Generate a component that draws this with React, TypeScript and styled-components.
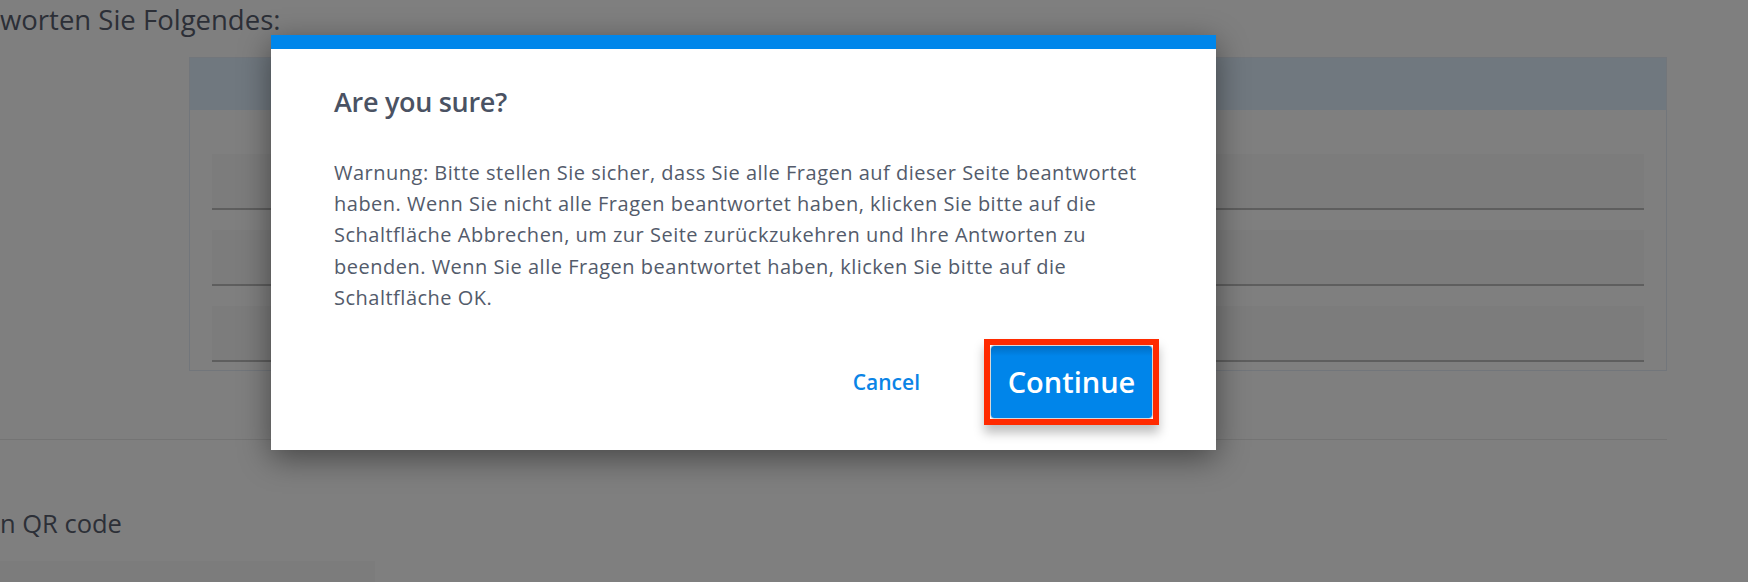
import styled, { createGlobalStyle } from 'styled-components';

const GlobalStyle = createGlobalStyle`
  html, body {
    margin: 0;
    padding: 0;
    background: #ffffff;
  }
  body {
    font-family: 'Open Sans', 'Noto Sans', sans-serif;
  }
`;

const Page = styled.div`
  position: relative;
  width: 1748px;
  height: 582px;
  overflow: hidden;
  background: #ffffff;
  display: flex;
  flex-direction: column;
`;

const SectionTitle = styled.h2<{ $top?: number; $size?: number }>`
  margin: ${(p) => p.$top ?? 0}px 0 0 0;
  font-size: ${(p) => p.$size ?? 26}px;
  line-height: 32px;
  font-weight: 400;
  color: #585e6e;
  white-space: nowrap;
`;

const Panel = styled.div`
  margin: 21px 0 0 189px;
  width: 1478px;
  box-sizing: border-box;
  border: 1px solid #e4ecf6;
  display: flex;
  flex-direction: column;
  padding-bottom: 8px;
`;

const PanelHeader = styled.div`
  height: 52px;
  background: #e0f0ff;
  margin-bottom: 44px;
`;

const RowList = styled.div`
  display: flex;
  flex-direction: column;
  gap: 20px;
  padding: 0 22px;
`;

const AnswerRow = styled.div`
  height: 54px;
  background: #f9f9f9;
  border-bottom: 2px solid #bdbdbd;
`;

const Divider = styled.div`
  margin-top: 68px;
  width: 1667px;
  height: 1px;
  background: #e8e8e8;
`;

const Strip = styled.div`
  margin-top: 22px;
  width: 375px;
  height: 30px;
  background: #f8f8f8;
`;

const Overlay = styled.div`
  position: absolute;
  inset: 0;
  background: rgba(0, 0, 0, 0.5);
  display: flex;
  align-items: flex-start;
  padding: 35px 0 0 271px;
`;

const Dialog = styled.div`
  width: 945px;
  background: #ffffff;
  border-top: 14px solid #0086ea;
  box-shadow: 0 8px 30px rgba(0, 0, 0, 0.45);
  padding: 36px 63px 25px;
  box-sizing: border-box;
  display: flex;
  flex-direction: column;
`;

const DialogTitle = styled.h3`
  margin: 0;
  font-size: 27px;
  line-height: 33.6px;
  font-weight: 600;
  letter-spacing: -0.3px;
  color: #4a5263;
`;

const DialogText = styled.p`
  margin: 38px 0 0;
  font-size: 20px;
  line-height: 31.4px;
  font-weight: 400;
  letter-spacing: 0.5px;
  color: #535b6b;
`;

const Actions = styled.div`
  margin-top: 25px;
  display: flex;
  justify-content: flex-end;
  align-items: center;
  gap: 64px;
`;

const LinkButton = styled.button`
  border: none;
  background: none;
  padding: 0;
  font-family: inherit;
  font-size: 21px;
  font-weight: 600;
  color: #0a84e6;
  cursor: pointer;
`;

/* red annotation box drawn around the primary action */
const HighlightFrame = styled.span`
  display: inline-flex;
  margin-right: -6px;
  border: 6px solid #ff2a00;
  box-shadow: 0 8px 10px rgba(0, 0, 0, 0.25);
`;

const PrimaryButton = styled.button`
  width: 163px;
  height: 74px;
  box-sizing: border-box;
  border: 1px solid #d6d6d6;
  border-radius: 4px;
  background: linear-gradient(#006ec4 0px, #0085ea 10px, #0085ea 100%);
  font-family: inherit;
  font-size: 29px;
  font-weight: 600;
  color: #ffffff;
  cursor: pointer;
`;

export default function App() {
  return (
    <>
      <GlobalStyle />
      <Page>
        <SectionTitle $top={4} $size={27.5}>
          worten Sie Folgendes:
        </SectionTitle>
        <Panel>
          <PanelHeader />
          <RowList>
            <AnswerRow />
            <AnswerRow />
            <AnswerRow />
          </RowList>
        </Panel>
        <Divider />
        <SectionTitle $top={67} $size={25.5}>
          n QR code
        </SectionTitle>
        <Strip />
        <Overlay>
          <Dialog role="dialog" aria-modal="true">
            <DialogTitle>Are you sure?</DialogTitle>
            <DialogText>
              Warnung: Bitte stellen Sie sicher, dass Sie alle Fragen auf dieser Seite beantwortet
              haben. Wenn Sie nicht alle Fragen beantwortet haben, klicken Sie bitte auf die
              Schaltfläche Abbrechen, um zur Seite zurückzukehren und Ihre Antworten zu beenden.
              Wenn Sie alle Fragen beantwortet haben, klicken Sie bitte auf die Schaltfläche OK.
            </DialogText>
            <Actions>
              <LinkButton>Cancel</LinkButton>
              <HighlightFrame>
                <PrimaryButton>Continue</PrimaryButton>
              </HighlightFrame>
            </Actions>
          </Dialog>
        </Overlay>
      </Page>
    </>
  );
}
